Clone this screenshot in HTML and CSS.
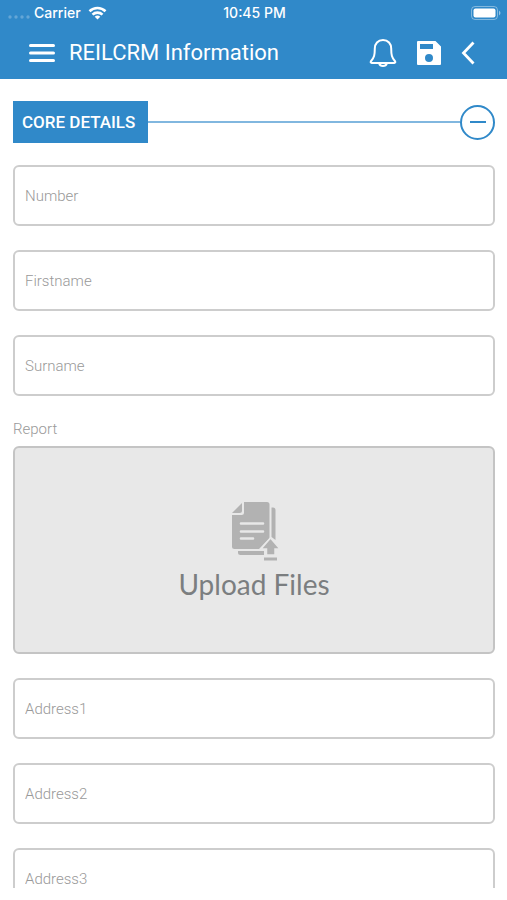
FILE: index.html
```html
<!DOCTYPE html>
<html lang="en">
<head>
<meta charset="utf-8">
<meta name="viewport" content="width=device-width, initial-scale=1">
<title>REILCRM Information</title>
<link rel="stylesheet" href="styles.css">
</head>
<body>
<header class="app-header">
  <div class="status-bar">
    <div class="status-left">
      <svg width="22" height="4" viewBox="0 0 22 4" fill="#fff" opacity=".25" aria-hidden="true"><circle cx="2" cy="2" r="1.7"/><circle cx="8" cy="2" r="1.7"/><circle cx="14" cy="2" r="1.7"/><circle cx="20" cy="2" r="1.7"/></svg>
      <span>Carrier</span>
      <svg class="wifi" width="19" height="14" viewBox="0 0 18 14" fill="none" stroke="#fff" stroke-width="2.6" aria-hidden="true"><path d="M1 5.200a11.500 11.500 0 0 1 16 0M4 8.600a7.200 7.200 0 0 1 10 0"/><path d="M9 13.600 6.200 10.800a4 4 0 0 1 5.600 0z" fill="#fff" stroke="none"/></svg>
    </div>
    <span>10:45 PM</span>
    <div class="status-right">
      <svg width="30" height="14" viewBox="0 0 30 14" aria-hidden="true"><rect x=".5" y=".5" width="26" height="13" rx="3.5" fill="none" stroke="#fff" stroke-opacity=".4"/><rect x="2.5" y="2.500" width="22" height="9" rx="2" fill="#fff"/><path d="M28 4.500q3 2.500 0 5z" fill="#fff" opacity=".5"/></svg>
    </div>
  </div>
  <div class="toolbar">
    <button class="icon-button" type="button" aria-label="Menu">
      <svg width="26" height="20" viewBox="0 0 26 20" fill="none" stroke="#fff" stroke-width="3" stroke-linecap="round"><path d="M1.500 2.500h23M1.500 10h23M1.500 17.500h23"/></svg>
    </button>
    <h1 class="title">REILCRM Information</h1>
    <div class="actions">
      <button class="icon-button" type="button" aria-label="Notifications">
        <svg width="28" height="30" viewBox="0 0 28 30" fill="none" stroke="#fff" stroke-width="2" stroke-linejoin="round" stroke-linecap="round"><path d="M14 2C8.800 2 5.800 5.800 5.800 10.500C5.800 17 5.200 19.500 1.800 23.500Q1.300 24.800 2.800 25H25.200Q26.700 24.800 26.200 23.500C22.800 19.500 22.200 17 22.200 10.500C22.200 5.800 19.200 2 14 2Z"/><path d="M10.200 25.500a3.900 3.200 0 0 0 7.600 0"/></svg>
      </button>
      <button class="icon-button" type="button" aria-label="Save">
        <svg width="24" height="24" viewBox="0 0 24 24" fill="#fff" fill-rule="evenodd"><path d="M1 0H18.500L24 5.500V23a1 1 0 0 1-1 1H1a1 1 0 0 1-1-1V1a1 1 0 0 1 1-1ZM3 3V8H16V3ZM12 13a4 4 0 1 0 0 8a4 4 0 0 0 0-8Z"/></svg>
      </button>
      <button class="icon-button" type="button" aria-label="Back">
        <svg width="14" height="24" viewBox="0 0 14 24" fill="none" stroke="#fff" stroke-width="2.800"><path d="M12.500 1.500 2.500 12l10 10.500"/></svg>
      </button>
    </div>
  </div>
</header>

<main class="content">
  <div class="section-head">
    <h2 class="section-title">Core details</h2>
    <span class="rule"></span>
    <button class="collapse" type="button" aria-label="Collapse core details">
      <svg width="16" height="2" viewBox="0 0 16 2" fill="#3089c9"><rect width="16" height="2"/></svg>
    </button>
  </div>
  <form class="fields">
    <input class="field" type="text" placeholder="Number" aria-label="Number">
    <input class="field" type="text" placeholder="Firstname" aria-label="Firstname">
    <input class="field" type="text" placeholder="Surname" aria-label="Surname">
    <div class="report">
      <span class="label" id="report-label">Report</span>
      <button class="upload" type="button" aria-describedby="report-label">
        <svg width="52" height="60" viewBox="-3 0 52 60" fill="#b2b2b2" aria-hidden="true">
          <path d="M13 1H36q2.500 0 2.500 2.500V37L28 48H3.500Q1 48 1 45.500V14H10.500q2.500 0 2.500-2.500Z"/>
          <path d="M11 2V9.500q0 2.500-2.500 2.500H1Z"/>
          <path d="M40.500 6.500h1.500q2.500 0 2.500 2.500V39L40.500 36ZM7 50H33v4H9.500Q7 54 7 51.500Z"/>
          <path d="M39.500 37 49 48H44V54H35.500V48H30Z" stroke="#e8e8e8" stroke-width="1.500"/>
          <path d="M33 56.500h13v3h-13z"/>
          <path d="M10 22.500h22M10 30.500h22M10 37.500h12" stroke="#e8e8e8" stroke-width="2.600" stroke-linecap="round"/>
        </svg>
        <span>Upload Files</span>
      </button>
    </div>
    <input class="field" type="text" placeholder="Address1" aria-label="Address1">
    <input class="field" type="text" placeholder="Address2" aria-label="Address2">
    <input class="field" type="text" placeholder="Address3" aria-label="Address3">
  </form>
</main>
</body>
</html>
```
FILE: styles.css
```css
* {
  box-sizing: border-box;
}

body {
  margin: 0;
  height: 100vh;
  padding-bottom: 12px;
  display: flex;
  flex-direction: column;
  background: #fff;
  font-family: Roboto, "Liberation Sans", sans-serif;
}

button {
  margin: 0;
  padding: 0;
  border: 0;
  background: none;
  font: inherit;
  cursor: pointer;
}

svg {
  display: block;
  flex: none;
}

.app-header {
  flex: none;
  background: #3089c9;
  color: #fff;
}

.status-bar {
  display: grid;
  grid-template-columns: 1fr auto 1fr;
  align-items: center;
  height: 26px;
  padding: 0 6px 0 8px;
  font: 500 14px/26px Inter, sans-serif;
}

.status-left {
  display: flex;
  align-items: center;
  gap: 4px;
}

.status-left svg:first-child {
  margin-top: 8px;
}

.wifi {
  margin-left: 3px;
}

.status-right {
  display: flex;
  justify-content: flex-end;
}

.toolbar {
  display: flex;
  align-items: center;
  height: 53px;
  padding: 0 32px 0 29px;
}

.title {
  margin: 0 0 0 14px;
  font-size: 22px;
  font-weight: 400;
  line-height: 28px;
}

.actions {
  display: flex;
  align-items: center;
  gap: 20px;
  margin-left: auto;
}

.content {
  flex: 1;
  min-height: 0;
  padding: 22px 12px 0 13px;
  overflow-y: auto;
  scrollbar-width: none;
}

.section-head {
  display: flex;
  align-items: center;
  margin-bottom: 22px;
}

.section-title {
  margin: 0;
  padding: 0 13px 0 9px;
  background: #3089c9;
  color: #fff;
  font-size: 17px;
  font-weight: 500;
  line-height: 42px;
  text-transform: uppercase;
}

.rule {
  flex: 1;
  height: 2px;
  background: #81b7df;
}

.collapse {
  display: grid;
  place-items: center;
  width: 35px;
  height: 35px;
  border: 2px solid #3089c9;
  border-radius: 50%;
}

.fields {
  display: flex;
  flex-direction: column;
  gap: 24px;
}

.field {
  width: 100%;
  height: 61px;
  padding: 0 10px;
  border: 2px solid #cdcdcd;
  border-radius: 6px;
  background: #fff;
  color: #444;
  font: 300 15px/20px Roboto, sans-serif;
}

.field::placeholder {
  color: #999;
  opacity: 1;
}

.report {
  display: flex;
  flex-direction: column;
  gap: 8px;
}

.label {
  color: #999;
  font-size: 15px;
  font-weight: 300;
  line-height: 18px;
}

.upload {
  display: flex;
  flex-direction: column;
  align-items: center;
  justify-content: center;
  gap: 3px;
  height: 208px;
  padding-top: 4px;
  border: 2px solid #c4c4c4;
  border-radius: 6px;
  background: #e8e8e8;
  color: #7b7e80;
  font: 400 28px/40px Lato, sans-serif;
}
```
